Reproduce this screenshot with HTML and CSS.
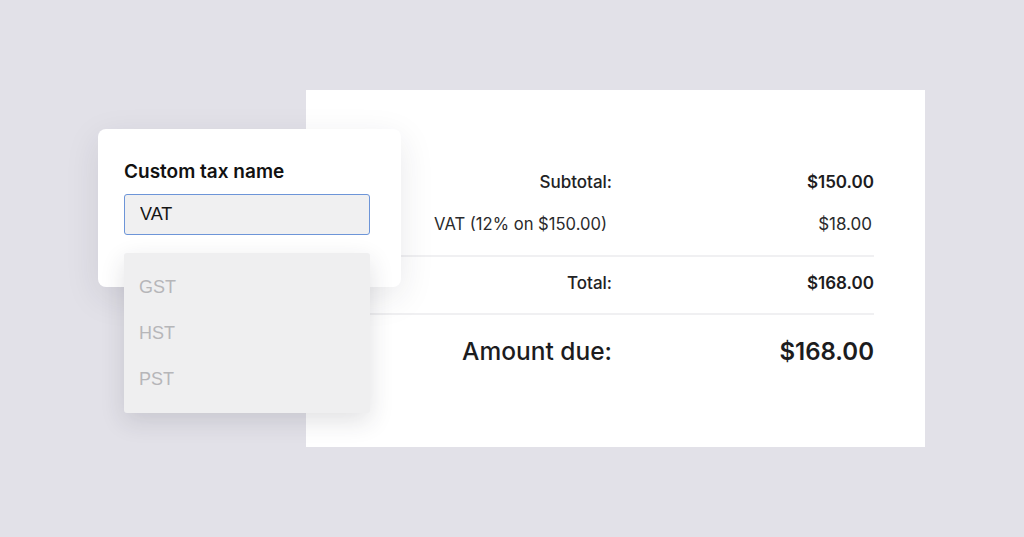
FILE: index.html
```html
<!DOCTYPE html>
<html lang="en">

<head>
  <meta charset="UTF-8">
  <meta name="viewport" content="width=device-width, initial-scale=1.0">
  <title>Custom tax name</title>
  <link rel="stylesheet" href="styles.css">
</head>

<body>
  <div class="stage">
    <div class="invoice">
      <div class="summary">
        <div class="row row-sub">
          <span class="label strong">Subtotal:</span>
          <span class="value strong">$150.00</span>
        </div>
        <div class="row row-vat">
          <span class="label">VAT (12% on $150.00)</span>
          <span class="value">$18.00</span>
        </div>
        <div class="divider"></div>
        <div class="row row-total">
          <span class="label strong">Total:</span>
          <span class="value strong">$168.00</span>
        </div>
        <div class="divider divider-due"></div>
        <div class="row row-due">
          <span class="label due">Amount due:</span>
          <span class="value due">$168.00</span>
        </div>
      </div>
    </div>

    <div class="tax-card">
      <label for="taxName">Custom tax name</label>
      <input type="text" id="taxName" value="VAT">
    </div>

    <ul class="suggestions">
      <li>GST</li>
      <li>HST</li>
      <li>PST</li>
    </ul>
  </div>
</body>

</html>
```

FILE: styles.css
```css
body {
  margin: 0;
  background-color: #e2e1e8;
  font-family: "Inter", "Liberation Sans", sans-serif;
  color: #1c1c1e;
}

.stage {
  position: relative;
  width: 1024px;
  height: 537px;
  padding: 90px 0 0 306px;
  box-sizing: border-box;
}

.invoice {
  background-color: #fff;
  width: 619px;
  height: 357px;
  padding: 71px 51px 0 54px;
  box-sizing: border-box;
}

.row {
  display: grid;
  grid-template-columns: 252px 1fr;
  align-items: center;
  height: 42px;
}

.label,
.value {
  text-align: right;
}

.label {
  font-size: 16px;
}

.value {
  font-size: 17px;
}

.strong {
  font-weight: 600;
}

.label.strong {
  font-size: 17px;
  font-weight: 500;
  color: #222224;
}

.row-vat .label {
  font-size: 16.6px;
  padding-right: 5px;
  color: #2a2a2c;
}

.row-vat .value {
  padding-right: 2px;
  color: #2a2a2c;
}

.divider {
  height: 2px;
  background-color: #f0f0f2;
  margin-top: 10px;
}

.row-total {
  height: 52px;
}

.divider-due {
  margin-top: 4px;
}

.row-due {
  height: 72px;
}

.label.due {
  font-size: 24.5px;
  font-weight: 500;
}

.value.due {
  font-size: 24px;
  font-weight: 600;
}

.tax-card {
  position: absolute;
  left: 98px;
  top: 129px;
  width: 303px;
  height: 158px;
  padding: 31px 31px 0 26px;
  box-sizing: border-box;
  background-color: #fff;
  border-radius: 8px;
  box-shadow: 0 10px 34px rgba(40, 40, 60, 0.10);
}

.tax-card label {
  display: block;
  font-size: 19px;
  font-weight: 600;
  color: #111;
  margin-bottom: 11px;
}

.tax-card input {
  display: block;
  width: 246px;
  height: 41px;
  padding: 0 15px;
  box-sizing: border-box;
  border: 1px solid #6d95d8;
  border-radius: 3px;
  background-color: #f0f0f1;
  font-family: "Liberation Sans", Arial, sans-serif;
  font-size: 18px;
  color: #151515;
  outline: none;
}

.suggestions {
  position: absolute;
  left: 124px;
  top: 253px;
  width: 246px;
  height: 160px;
  margin: 0;
  padding: 11px 0 0 15px;
  box-sizing: border-box;
  list-style: none;
  background-color: #efeff0;
  border-radius: 3px;
  box-shadow: 0 8px 24px rgba(40, 40, 60, 0.14);
}

.suggestions li {
  height: 46px;
  line-height: 46px;
  font-family: "Liberation Sans", Arial, sans-serif;
  font-size: 18px;
  color: #b6b6b9;
}
```
